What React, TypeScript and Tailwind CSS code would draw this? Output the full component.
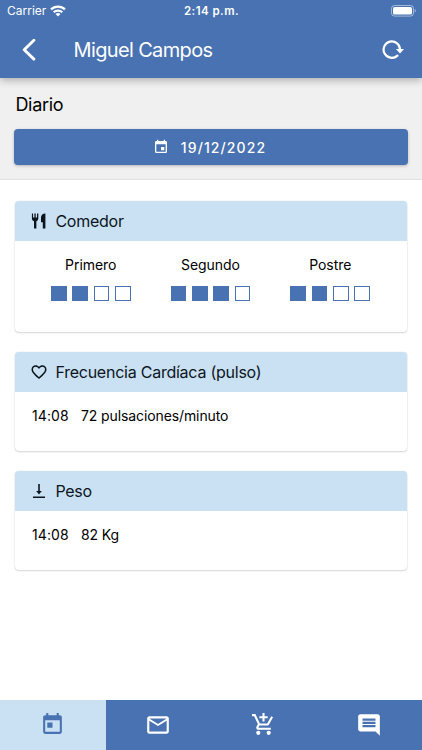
import type { ReactNode } from 'react';
import {
    MdAddShoppingCart,
    MdEvent,
    MdFavoriteBorder,
    MdInsertComment,
    MdMailOutline,
    MdToday,
} from 'react-icons/md';

const MEALS = [
    { name: 'Primero', eaten: 2 },
    { name: 'Segundo', eaten: 3 },
    { name: 'Postre', eaten: 2 },
];

function CutleryIcon() {
    return (
        <svg viewBox="0 0 16 16" className="w-4 h-4" fill="currentColor">
            <path d="M.9.4h1.200v4.200h1.300V.4h1.300v4.200H6V.4h1.300v5.100c0 1.500-.8 2.300-1.900 2.700v7.400H3V8.200C1.700 7.800.9 7 .9 5.500z" />
            <path d="M14.400.4v15.200h-2.600V9.200H10V4.600c0-2.700 1.700-4.200 4.400-4.200z" />
        </svg>
    );
}

function WeightIcon() {
    return (
        <svg viewBox="0 0 16 16" className="w-4 h-4" fill="none" stroke="currentColor" strokeWidth="1.600">
            <path d="M8 1v8M2 14.200h12" />
            <path d="M5.200 8h5.600L8 11.400z" fill="currentColor" stroke="none" />
        </svg>
    );
}

function StatusBar() {
    return (
        <div className="grid grid-cols-3 items-center h-[22px] pl-[7px] pr-[6px]">
            <div className="flex items-center gap-1">
                <span className="text-[12px] leading-none">Carrier</span>
                <svg viewBox="0 0 16 12" className="w-4 h-3" fill="none" stroke="currentColor" strokeWidth="2.200">
                    <path d="M1 4.400a10 10 0 0 1 14 0" />
                    <path d="M3.700 7.300a6.200 6.200 0 0 1 8.600 0" />
                    <path d="M8 11.600 5.500 9.100a3.600 3.600 0 0 1 5 0z" fill="currentColor" stroke="none" />
                </svg>
            </div>
            <span className="text-center text-[11.500px] leading-none pt-[2px] font-semibold tracking-[0.450px] whitespace-nowrap">
                2:14 p.m.
            </span>
            <svg viewBox="0 0 25 12" className="w-[25px] h-3 justify-self-end" fill="none">
                <rect x=".5" y=".5" width="22" height="10.600" rx="3" stroke="white" strokeOpacity=".5" />
                <rect x="2" y="2" width="19" height="7.600" rx="1.600" fill="white" />
                <path d="M23.700 4v3.600c.700-.3 1.200-1 1.200-1.800s-.5-1.500-1.200-1.800z" fill="white" fillOpacity=".5" />
            </svg>
        </div>
    );
}

function Card({ icon, title, children }: { icon: ReactNode; title: string; children: ReactNode }) {
    return (
        <section className="rounded-[4px] bg-white overflow-hidden shadow-[0_0_1px_rgba(0,0,0,0.2),0_1px_2px_rgba(0,0,0,0.15)]">
            <h2 className="h-10 bg-[#c9e1f3] pl-4 flex items-center gap-2 text-[16px] tracking-[-0.240px] text-[#0c151d]">
                <span className="w-4 flex items-center justify-center shrink-0">{icon}</span>
                {title}
            </h2>
            {children}
        </section>
    );
}

function Reading({ time, value }: { time: string; value: string }) {
    return (
        <div className="h-[59px] pl-[16.500px] pt-[15px] flex gap-3 text-[14px] leading-[18px]">
            <span className="tracking-[0.150px]">{time}</span>
            <span className="tracking-[-0.100px]">{value}</span>
        </div>
    );
}

export default function App() {
    return (
        <div className="h-[750px] w-[422px] bg-white text-black flex flex-col overflow-hidden font-['Inter',sans-serif]">
            {/* Header */}
            <header className="relative z-10 h-[78px] shrink-0 bg-[#4872b1] text-white shadow-[0_2px_8px_rgba(0,0,0,0.3)]">
                <StatusBar />
                <div className="flex items-center h-[55px] pl-[22px] pr-[18px]">
                    <svg viewBox="0 0 14 22" className="w-[14px] h-[22px]" fill="none" stroke="currentColor" strokeWidth="2.900" strokeLinecap="round" strokeLinejoin="round">
                        <path d="M11.900 1.300 2.200 10.700l9.700 9.400" />
                    </svg>
                    <h1 className="ml-[37.500px] text-[20px] leading-none tracking-[-0.640px]">Miguel Campos</h1>
                    <svg viewBox="0 0 22 20" className="ml-auto w-[22px] h-5" fill="none" stroke="currentColor" strokeWidth="2.200">
                        <path d="M15.400 15.600A8.200 8.200 0 1 1 18 9.600" strokeLinecap="round" />
                        <path d="M14 9h8l-4 4.500z" fill="currentColor" stroke="none" />
                    </svg>
                </div>
            </header>

            {/* Date picker */}
            <div className="h-[102px] shrink-0 bg-[#f0f0f0] border-b border-[#e2e2e2] px-[14.400px] pt-4">
                <p className="text-[18px] leading-[21px] pl-px tracking-[-0.300px]">Diario</p>
                <button className="mt-[14px] w-full h-[36px] rounded-[4px] bg-[#4872b1] text-white flex items-center justify-center gap-3 shadow-[0_1px_3px_rgba(0,0,0,0.25)]">
                    <MdEvent className="w-4 h-4 -ml-[3px]" />
                    <span className="text-[14px] font-medium tracking-[1.100px]">19/12/2022</span>
                </button>
            </div>

            {/* Cards */}
            <main className="flex-1 flex flex-col gap-[20px] px-[15.400px] pt-[20.500px]">
                <Card icon={<CutleryIcon />} title="Comedor">
                    <div className="h-[91px] grid grid-cols-3 pl-[15.500px] pr-[16.500px] pt-[15px]">
                        {MEALS.map((meal) => (
                            <div key={meal.name} className="flex flex-col items-center">
                                <span className="text-[14px] leading-[18px] tracking-[-0.050px]">{meal.name}</span>
                                <div className="flex gap-[5.700px] mt-[12px]">
                                    {[0, 1, 2, 3].map((i) => (
                                        <span
                                            key={i}
                                            className={`w-[15.700px] h-[15.700px] border border-[#4872b1] ${i < meal.eaten ? 'bg-[#4872b1]' : ''}`}
                                        />
                                    ))}
                                </div>
                            </div>
                        ))}
                    </div>
                </Card>

                <Card icon={<MdFavoriteBorder className="w-[18px] h-[18px] shrink-0" />} title="Frecuencia Cardíaca (pulso)">
                    <Reading time="14:08" value="72 pulsaciones/minuto" />
                </Card>

                <Card icon={<WeightIcon />} title="Peso">
                    <Reading time="14:08" value="82 Kg" />
                </Card>
            </main>

            {/* Tabs */}
            <nav className="h-[50px] shrink-0 grid grid-cols-4 bg-[#4872b1] text-white">
                <button className="flex items-center justify-center bg-[#c9e1f3] text-[#4872b1]">
                    <MdToday className="w-[25px] h-[25px] mb-[2px]" />
                </button>
                <button className="flex items-center justify-center">
                    <MdMailOutline className="w-[26px] h-[26px] mb-px" />
                </button>
                <button className="flex items-center justify-center">
                    <MdAddShoppingCart className="w-[25px] h-[25px] mb-[2px]" />
                </button>
                <button className="flex items-center justify-center">
                    <MdInsertComment className="w-[26px] h-[26px] mb-px" />
                </button>
            </nav>
        </div>
    );
}
